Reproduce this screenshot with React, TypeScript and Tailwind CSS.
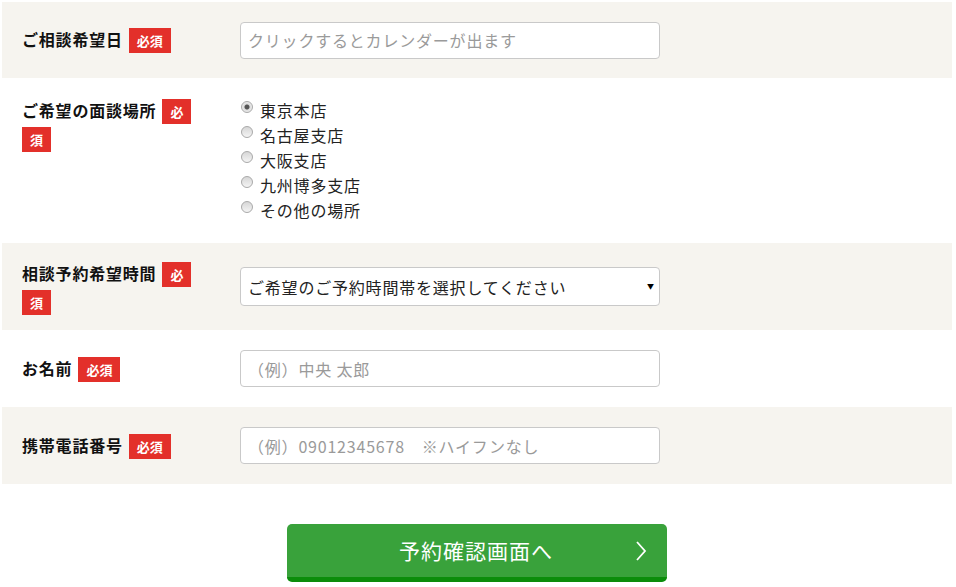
const font = { fontFamily: '"Noto Sans CJK JP", "Noto Sans", sans-serif' }

function Badge() {
  return (
    <>
      <span className="inline-block w-[6px]" />
      <span className="inline bg-[#e3302a] px-[8px] py-[3px] text-[13px] font-bold leading-[26px] tracking-normal text-white [box-decoration-break:clone]">
        必須
      </span>
    </>
  )
}

function Label({ text }: { text: string }) {
  return (
    <div className="w-[238px] shrink-0 pl-[20px] pr-[53px] text-[16px] font-bold leading-[26px] tracking-[0.8px] text-[#111]">
      {text}
      <Badge />
    </div>
  )
}

function TextInput({ placeholder }: { placeholder: string }) {
  return (
    <input
      type="text"
      placeholder={placeholder}
      className="h-[37px] w-[420px] rounded-[4px] border border-[#c9c9c9] bg-white px-[7px] text-[16px] tracking-[0.8px] text-[#333] outline-none placeholder:text-[#9a9a9a]"
      style={font}
    />
  )
}

const places = ['東京本店', '名古屋支店', '大阪支店', '九州博多支店', 'その他の場所']

export default function App() {
  return (
    <div className="min-h-[587px] bg-white pl-[2px] pt-[2px]" style={font}>
      <div className="w-[950px]">
        {/* 希望日 */}
        <div className="flex h-[76px] items-center bg-[#f6f4ef]">
          <Label text="ご相談希望日" />
          <TextInput placeholder="クリックするとカレンダーが出ます" />
        </div>

        {/* 面談場所 */}
        <div className="flex h-[165px] items-start bg-white pt-[19px]">
          <Label text="ご希望の面談場所" />
          <div className="flex flex-col">
            {places.map((p, i) => (
              <label key={p} className="flex h-[25px] items-center text-[16px] tracking-[0.8px] text-[#222]">
                <input
                  type="radio"
                  name="place"
                  defaultChecked={i === 0}
                  className="mr-[7px] ml-[1px] -mt-[6px] h-[12px] w-[12px] appearance-none rounded-full border border-[#a9a9a9] bg-[linear-gradient(#d6d6d6,#f4f4f4)] checked:bg-[radial-gradient(circle,#555_0,#555_2px,#dcdcdc_3px,#f2f2f2_6px)]"
                />
                {p}
              </label>
            ))}
          </div>
        </div>

        {/* 予約時間 */}
        <div className="flex h-[87px] items-center bg-[#f6f4ef]">
          <div className="mt-[3px]">
            <Label text="相談予約希望時間" />
          </div>
          <div className="relative">
            <select
              className="h-[39px] w-[420px] appearance-none rounded-[4px] border border-[#c9c9c9] bg-white px-[7px] text-[16px] tracking-[0.8px] text-[#222] outline-none"
              style={font}
            >
              <option>ご希望のご予約時間帯を選択してください</option>
            </select>
            <span className="pointer-events-none absolute right-[6px] top-[14px] text-[7px] text-black">▼</span>
          </div>
        </div>

        {/* 名前 */}
        <div className="flex h-[77px] items-center bg-white">
          <Label text="お名前" />
          <TextInput placeholder="（例）中央 太郎" />
        </div>

        {/* 電話番号 */}
        <div className="flex h-[77px] items-center bg-[#f6f4ef]">
          <Label text="携帯電話番号" />
          <TextInput placeholder="（例）09012345678　※ハイフンなし" />
        </div>

        <div className="flex justify-center pt-[40px]">
          <button
            type="button"
            className="relative flex h-[58px] w-[380px] items-center justify-center rounded-[5px] border-b-[5px] border-[#0b8d0b] bg-[#39a23b] pr-[2px] text-[21px] tracking-[1px] text-white"
            style={font}
          >
            予約確認画面へ
            <svg
              className="absolute right-[20px] top-[17px]"
              width="12"
              height="20"
              viewBox="0 0 12 20"
              fill="none"
              stroke="white"
              strokeWidth="1.8"
            >
              <path d="M2 1 L10 10 L2 19" />
            </svg>
          </button>
        </div>
      </div>
    </div>
  )
}
